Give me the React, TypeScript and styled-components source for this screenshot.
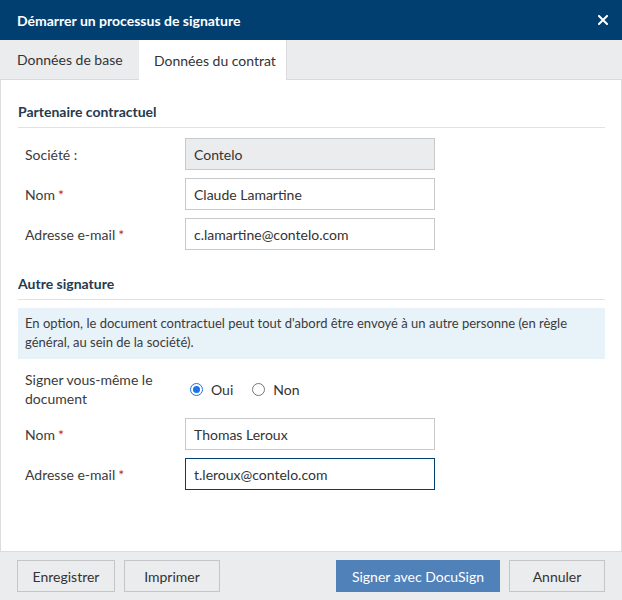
import * as React from 'react';
import styled, { createGlobalStyle } from 'styled-components';

const GlobalStyle = createGlobalStyle`
  html, body {
    margin: 0;
    padding: 0;
    background: #ffffff;
  }
  body {
    font-family: Lato, "Noto Sans", sans-serif;
    font-size: 14px;
    color: #333333;
  }
  * {
    box-sizing: border-box;
  }
`;

const Dialog = styled.div`
  width: 622px;
  height: 600px;
  display: flex;
  flex-direction: column;
  background: #ffffff;
`;

const Header = styled.div`
  height: 40px;
  flex: none;
  background: #013f71;
  color: #ffffff;
  display: flex;
  align-items: center;
  justify-content: space-between;
  padding: 0 12px 0 17px;
  font-size: 14px;
  font-weight: 700;
`;

const CloseButton = styled.span`
  width: 14px;
  height: 14px;
  display: flex;
  align-items: center;
  justify-content: center;
  cursor: pointer;
`;

const TabBar = styled.div`
  height: 40px;
  flex: none;
  display: flex;
  align-items: flex-start;
  background: #ebecee;
  border-bottom: 1px solid #d9dadc;
`;

const Tab = styled.div<{ active?: boolean }>`
  flex: none;
  white-space: nowrap;
  height: ${({ active }) => (active ? '40px' : '39px')};
  width: ${({ active }) => (active ? '148px' : '139px')};
  display: flex;
  align-items: center;
  padding-left: ${({ active }) => (active ? '15px' : '17px')};
  background: ${({ active }) => (active ? '#ffffff' : 'transparent')};
  border-right: ${({ active }) => (active ? '1px solid #d9dadc' : 'none')};
  color: #333333;
  font-size: 14px;
`;

const Content = styled.div`
  flex: 1;
  padding: 16px 16px 0 17px;
  border-left: 1px solid #dcdcdc;
  border-right: 1px solid #dcdcdc;
`;

const Section = styled.div`
  margin-bottom: 18px;
`;

const SectionTitle = styled.div`
  font-size: 14px;
  font-weight: 700;
  color: #253a4e;
  height: 32px;
  line-height: 32px;
  border-bottom: 1px solid #e1e2e4;
  margin-bottom: 10px;
`;

const FormRow = styled.div<{ gap?: number }>`
  display: flex;
  align-items: center;
  padding-left: 7px;
  min-height: 32px;
  margin-bottom: ${({ gap }) => gap ?? 8}px;
`;

const Label = styled.div`
  width: 160px;
  flex: none;
  font-size: 14px;
  color: #3b3b3b;
  line-height: 19px;
  padding-right: 12px;
`;

const Required = styled.span`
  color: #b3242f;
  margin-left: 3px;
`;

const Input = styled.input<{ focused?: boolean }>`
  width: 250px;
  height: 32px;
  border: 1px solid ${({ focused }) => (focused ? '#013f71' : '#c8c9cb')};
  background: ${({ disabled }) => (disabled ? '#ebecee' : '#ffffff')};
  padding: 0 8px;
  font-family: Lato, "Noto Sans", sans-serif;
  font-size: 14px;
  color: #333333;
  outline: none;
  &:disabled {
    color: #333333;
  }
`;

const InfoBox = styled.div`
  background: #e8f2f9;
  padding: 6px 7px 7px;
  font-size: 13px;
  line-height: 19px;
  color: #3b3b3b;
  margin: -2px 0 11px;
`;

const RadioGroup = styled.div`
  display: flex;
  align-items: center;
  gap: 19px;
  margin-left: 5px;
`;

const RadioOption = styled.label`
  display: flex;
  align-items: center;
  gap: 8px;
  font-size: 14px;
  color: #333333;
`;

const RadioDot = styled.span<{ checked?: boolean }>`
  width: 13px;
  height: 13px;
  border-radius: 50%;
  border: ${({ checked }) => (checked ? '1.5px solid #1a73e8' : '1px solid #767676')};
  display: flex;
  align-items: center;
  justify-content: center;
  &::after {
    content: '';
    width: 7px;
    height: 7px;
    border-radius: 50%;
    background: ${({ checked }) => (checked ? '#1a73e8' : 'transparent')};
  }
`;

const Footer = styled.div`
  height: 49px;
  flex: none;
  background: #ebecee;
  border-top: 1px solid #dcdcdc;
  display: flex;
  align-items: center;
  padding: 0 17px;
  gap: 9px;
`;

const Spacer = styled.div`
  flex: 1;
`;

const Button = styled.button<{ primary?: boolean; w: number }>`
  height: 32px;
  width: ${({ w }) => w}px;
  border: 1px solid ${({ primary }) => (primary ? '#5181b9' : '#c4c5c7')};
  background: ${({ primary }) => (primary ? '#5181b9' : '#ebecee')};
  color: ${({ primary }) => (primary ? '#ffffff' : '#333333')};
  font-family: Lato, "Noto Sans", sans-serif;
  font-size: 14px;
  padding: 0;
  cursor: pointer;
`;

const CloseIcon = () => (
  <svg width="10" height="10" viewBox="0 0 10 10">
    <path d="M1 1 L9 9 M9 1 L1 9" stroke="#ffffff" strokeWidth="2" strokeLinecap="square" />
  </svg>
);

export default function App() {
  return (
    <>
      <GlobalStyle />
      <Dialog>
        <Header>
          <span>Démarrer un processus de signature</span>
          <CloseButton>
            <CloseIcon />
          </CloseButton>
        </Header>
        <TabBar>
          <Tab>Données de base</Tab>
          <Tab active>Données du contrat</Tab>
        </TabBar>
        <Content>
          <Section>
            <SectionTitle>Partenaire contractuel</SectionTitle>
            <FormRow>
              <Label>Société :</Label>
              <Input disabled value="Contelo" readOnly />
            </FormRow>
            <FormRow>
              <Label>
                Nom<Required>*</Required>
              </Label>
              <Input value="Claude Lamartine" readOnly />
            </FormRow>
            <FormRow>
              <Label>
                Adresse e-mail<Required>*</Required>
              </Label>
              <Input value="c.lamartine@contelo.com" readOnly />
            </FormRow>
          </Section>
          <Section>
            <SectionTitle>Autre signature</SectionTitle>
            <InfoBox>
              En option, le document contractuel peut tout d'abord être envoyé à un autre personne (en règle
              général, au sein de la société).
            </InfoBox>
            <FormRow gap={10}>
              <Label>Signer vous-même le document</Label>
              <RadioGroup>
                <RadioOption>
                  <RadioDot checked />
                  Oui
                </RadioOption>
                <RadioOption>
                  <RadioDot />
                  Non
                </RadioOption>
              </RadioGroup>
            </FormRow>
            <FormRow>
              <Label>
                Nom<Required>*</Required>
              </Label>
              <Input value="Thomas Leroux" readOnly />
            </FormRow>
            <FormRow>
              <Label>
                Adresse e-mail<Required>*</Required>
              </Label>
              <Input focused value="t.leroux@contelo.com" readOnly />
            </FormRow>
          </Section>
        </Content>
        <Footer>
          <Button w={98}>Enregistrer</Button>
          <Button w={96}>Imprimer</Button>
          <Spacer />
          <Button primary w={164}>Signer avec DocuSign</Button>
          <Button w={96}>Annuler</Button>
        </Footer>
      </Dialog>
    </>
  );
}
